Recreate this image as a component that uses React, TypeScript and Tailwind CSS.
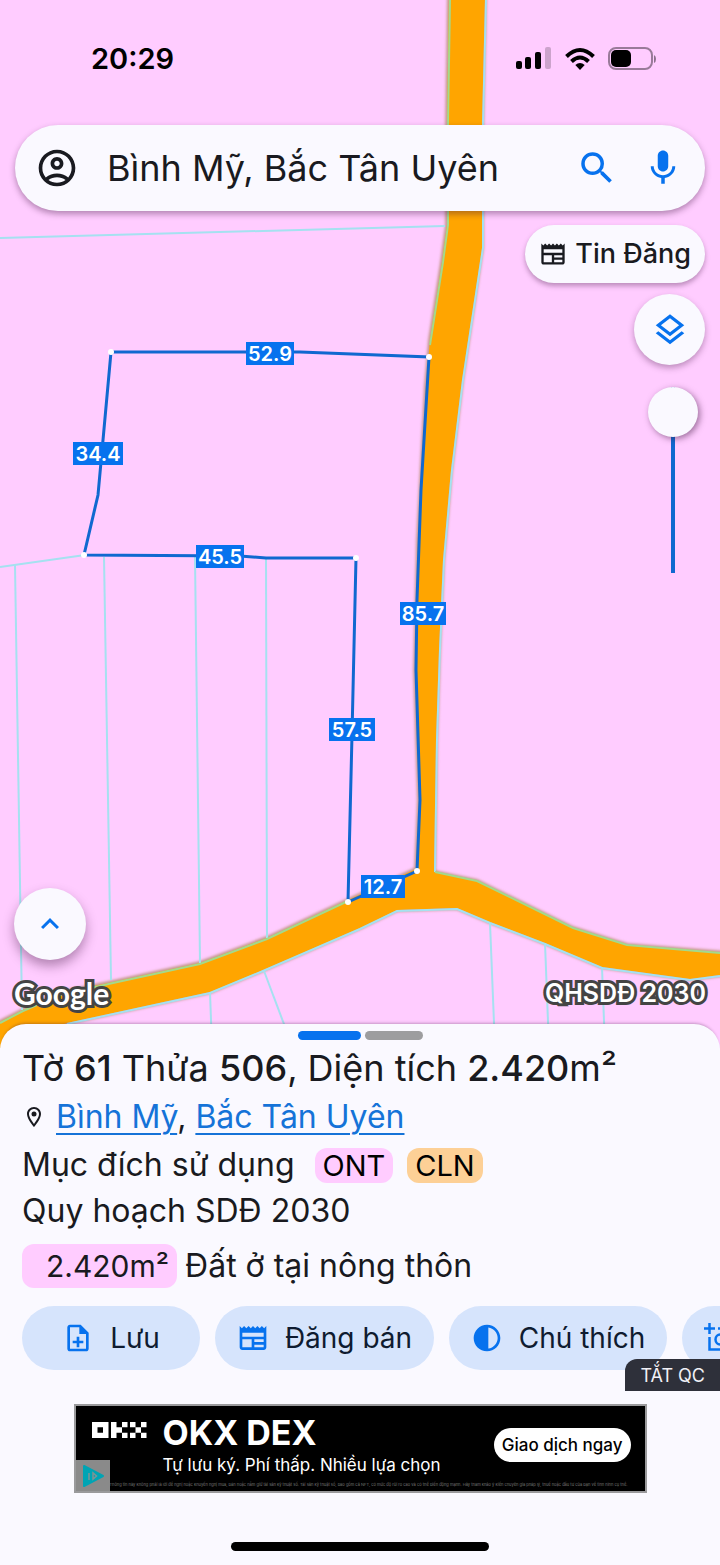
import { useState } from "react";
import type { ReactNode } from "react";
import {
  MdContrast,
  MdKeyboardArrowUp,
  MdMic,
  MdNewspaper,
  MdOutlineAccountCircle,
  MdOutlineLayers,
  MdOutlineLocationOn,
  MdOutlineNoteAdd,
  MdSearch,
} from "react-icons/md";

type EdgeLabel = {
  x: number;
  y: number;
  width: number;
  length: string;
};

const edgeLabels: EdgeLabel[] = [
  { x: 270, y: 354, width: 48, length: "52.9" },
  { x: 98, y: 454, width: 50, length: "34.4" },
  { x: 220, y: 557, width: 48, length: "45.5" },
  { x: 423, y: 614, width: 46, length: "85.7" },
  { x: 352, y: 730, width: 46, length: "57.5" },
  { x: 383, y: 887, width: 44, length: "12.7" },
];

const corners = [
  [111, 352],
  [429, 357],
  [84, 555],
  [356, 558],
  [417, 871],
  [348, 902],
];

const roadPath =
  "M449 -6 L447 125 L447 225 L442 262 L430 340 L426 385 L418 540 L415 670 L419 800 L416 869 L348 900 L267 938 L200 963 L113 982 L60 993 L23 1010 L-8 1026 V1070 L30 1036 L67 1023 L210 992 L263 970 L360 928 L397 910 L457 908 L490 922 L545 943 L602 967 L690 979 L728 974 V953 L627 945 L573 928 L477 881 L434 872 L436 740 L439 650 L443 560 L451 470 L462 380 L482 248 L482 125 L485 -6 Z";

function ParcelMap() {
  return (
    <svg
      className="absolute inset-0 size-full"
      viewBox="0 0 720 1048"
      preserveAspectRatio="xMidYMid slice"
      role="img"
      aria-label="Bản đồ thửa đất"
    >
      <defs>
        <filter id="roadEdge" x="-5%" y="-5%" width="110%" height="110%">
          <feGaussianBlur stdDeviation="1.5" />
        </filter>
      </defs>
      <rect width="720" height="1048" fill="#ffccff" />

      <path d={roadPath} fill="none" stroke="#b58a6c" strokeWidth="3" filter="url(#roadEdge)" />
      <path d={roadPath} fill="#ffa500" />

      {/* neighbouring parcels */}
      <g fill="none" stroke="#a5e1f0" strokeWidth="2">
        <path d="M0 238 L445 226" />
        <path d="M0 567 L85 555" />
        <path d="M15 565 L22 1010" />
        <path d="M104 557 L111 980" />
        <path d="M195 557 L200 963" />
        <path d="M266 558 L267 938" />
        <path d="M210 992 L212 1048" />
        <path d="M264 971 L290 1040" />
        <path d="M490 923 L495 1048" />
        <path d="M545 943 L549 1048" />
        <path d="M602 967 L605 1048" />
        <path d="M486 0 L483 125 L483 248 L463 380 L452 470 L444 560 L440 650 L437 740 L435 872" />
        <path d="M67 1024 L210 993 L263 971 L360 929 L397 911 L457 909 L490 923 L545 944 L602 968 L690 980 L720 976" />
      </g>
      <g fill="none" stroke="#a3d98c" strokeWidth="2">
        <path d="M450 0 L448 125 L448 225 L443 262 L430 345" />
        <path d="M0 1023 L23 1011 L60 995 L113 983 L200 964 L267 939 L348 901" />
        <path d="M435 872 L477 881 L573 928 L627 945 L720 953" />
      </g>

      <path
        d="M111 352 L300 352 L429 357 L421 490 L417 600 L416 670 L420 800 L417 871 L348 902 L352 735 L356 558 L266 558 L240 556 L84 555 L98 495 Z"
        fill="none"
        stroke="#1068d0"
        strokeWidth="3"
      />
      {corners.map(([x, y]) => (
        <circle key={`${x}-${y}`} cx={x} cy={y} r="3" fill="#fff" />
      ))}
      {edgeLabels.map((label) => (
        <g key={label.length}>
          <rect x={label.x - label.width / 2} y={label.y - 12} width={label.width} height="23" fill="#0772ee" />
          <text
            x={label.x}
            y={label.y + 7}
            textAnchor="middle"
            fill="#fff"
            className="font-['Inter',sans-serif] text-[20px] font-semibold"
          >
            {label.length}
          </text>
        </g>
      ))}
    </svg>
  );
}

function StatusBar() {
  return (
    <div className="flex h-[125px] items-center justify-between pt-2 pr-[62px] pb-4 pl-[91px] text-black">
      <time className="text-[29px] font-semibold">20:29</time>
      <div className="flex items-center gap-3">
        <svg width="36" height="24" viewBox="0 0 36 24" aria-label="Sóng di động">
          <rect x="0" y="14" width="6" height="8" rx="2" />
          <rect x="9" y="10" width="6" height="12" rx="2" />
          <rect x="19" y="5" width="6" height="17" rx="2" />
          <rect x="29" y="0" width="6" height="22" rx="2" opacity="0.2" />
        </svg>
        <svg width="32" height="24" viewBox="0 0 32 24" aria-label="Wi-Fi">
          <g fill="none" stroke="#000" strokeWidth="4">
            <path d="M2.5 9.5 Q16 -3.5 29.5 9.5" />
            <path d="M7.5 14.5 Q16 6.5 24.5 14.5" />
          </g>
          <path d="M11.3 18 Q16 14 20.7 18 L16 23 Z" />
        </svg>
        <svg width="50" height="24" viewBox="0 0 50 24" aria-label="Pin">
          <rect x="1" y="1" width="43" height="21" rx="7" fill="none" stroke="#000" strokeOpacity="0.4" strokeWidth="2" />
          <rect x="3" y="3" width="20" height="17" rx="5" />
          <path d="M46 8 Q48 9 48 12 Q48 15 46 16 Z" opacity="0.45" />
        </svg>
      </div>
    </div>
  );
}

function SearchBar() {
  const [query, setQuery] = useState("Bình Mỹ, Bắc Tân Uyên");

  return (
    <form
      role="search"
      className="mx-[15px] flex h-[86px] items-center rounded-full bg-[#faf9ff] pr-[21px] pl-5 shadow-[0_3px_6px_rgba(60,20,60,0.4)]"
    >
      <button type="button" aria-label="Tài khoản">
        <MdOutlineAccountCircle className="size-[44px] text-[#191a20]" />
      </button>
      <input
        type="text"
        aria-label="Tìm kiếm"
        value={query}
        onChange={(event) => setQuery(event.target.value)}
        className="ml-7 min-w-0 flex-1 bg-transparent text-[36px] text-[#191a20] outline-none"
      />
      <button type="submit" aria-label="Tìm">
        <MdSearch className="size-[42px] text-[#0772ee]" />
      </button>
      <button type="button" aria-label="Tìm bằng giọng nói" className="ml-6">
        <MdMic className="size-[42px] text-[#0772ee]" />
      </button>
    </form>
  );
}

function MapTools() {
  const [opacity, setOpacity] = useState(100);

  return (
    <div className="mt-[14px] mr-[15px] flex flex-col items-end">
      <button
        type="button"
        className="flex h-[58px] items-center gap-2 rounded-full bg-[#faf9ff] px-[14px] text-[27px] font-medium text-[#191a20] shadow-[0_3px_5px_rgba(60,20,60,0.35)]"
      >
        <MdNewspaper className="size-7" />
        Tin Đăng
      </button>
      <button
        type="button"
        aria-label="Lớp bản đồ"
        className="mt-[11px] flex size-[71px] items-center justify-center rounded-full bg-[#faf9ff] shadow-[0_3px_6px_rgba(60,20,60,0.35)]"
      >
        <MdOutlineLayers className="size-[38px] text-[#0772ee]" />
      </button>
      <input
        type="range"
        aria-label="Độ trong suốt"
        min={0}
        max={100}
        value={opacity}
        onChange={(event) => setOpacity(Number(event.target.value))}
        className="mt-[22px] mr-[7px] h-[186px] w-[50px] appearance-none bg-[linear-gradient(#1068d0,#1068d0)] bg-[length:4px_100%] bg-center bg-no-repeat [direction:rtl] [writing-mode:vertical-lr] [&::-webkit-slider-thumb]:size-[50px] [&::-webkit-slider-thumb]:appearance-none [&::-webkit-slider-thumb]:rounded-full [&::-webkit-slider-thumb]:bg-[#faf9ff] [&::-webkit-slider-thumb]:shadow-[2px_2px_6px_rgba(60,20,60,0.5)]"
      />
    </div>
  );
}

function AddFrameIcon() {
  return (
    <svg className="size-8 shrink-0 text-[#0772ee]" viewBox="0 0 32 32" fill="none" stroke="currentColor" strokeWidth="2.5" aria-hidden>
      <path d="M0 6.500h11M5.500 1v11" />
      <path d="M14 6.500h5M22 6.500h5v5" />
      <path d="M5.500 15v12.500h22V15" />
      <circle cx="16.500" cy="17.500" r="5" />
    </svg>
  );
}

function ActionButton({ icon, label, width }: { icon: ReactNode; label: string; width: string }) {
  return (
    <button
      type="button"
      className={`flex h-16 shrink-0 items-center justify-center rounded-full bg-[#d6e4fc] text-[28px] text-[#0f1b30] ${width}`}
    >
      {icon}
      {label}
    </button>
  );
}

function ParcelSheet() {
  return (
    <section className="relative -mt-6 rounded-t-[26px] bg-[#faf9ff] pt-[7px] text-[#191a20] shadow-[0_-3px_3px_-2px_rgba(60,20,60,0.3)]">
      <div className="flex justify-center gap-1">
        <span className="h-[9px] w-[63px] rounded-full bg-[#0772ee]" />
        <span className="h-[9px] w-[58px] rounded-full bg-[#9d9d9f]" />
      </div>

      <div className="px-[22px]">
        <h1 className="mt-1 text-[36px] leading-[48px]">
          Tờ <b className="font-medium">61</b> Thửa <b className="font-medium">506</b>, Diện tích{" "}
          <b className="font-medium">2.420</b>m²
        </h1>
        <p className="flex items-center text-[32px] leading-[50px]">
          <MdOutlineLocationOn className="mr-[10px] size-6" />
          <span>
            <a href="#binh-my" className="text-[#1573d8] underline decoration-2 underline-offset-[5px]">
              Bình Mỹ
            </a>
            ,{" "}
            <a href="#bac-tan-uyen" className="text-[#1573d8] underline decoration-2 underline-offset-[5px]">
              Bắc Tân Uyên
            </a>
          </span>
        </p>
        <p className="flex items-center text-[32px] leading-[46px]">
          Mục đích sử dụng
          <span className="ml-5 rounded-xl bg-[#ffccff] px-2 text-[29px] leading-[35px] text-black">ONT</span>
          <span className="ml-[14px] rounded-xl bg-[#fdd096] px-2 text-[29px] leading-[35px] text-black">CLN</span>
        </p>
        <h2 className="text-[32px] leading-[46px]">Quy hoạch SDĐ 2030</h2>
        <p className="mt-[10px] flex items-center text-[32px] leading-[44px]">
          <span className="mr-2 rounded-xl bg-[#ffccff] pr-2 pl-6 text-[30px] leading-[44px]">2.420m²</span>
          Đất ở tại nông thôn
        </p>
      </div>

      <div className="relative">
        <div className="mt-[18px] flex gap-[15px] overflow-hidden pl-[22px]">
          <ActionButton icon={<MdOutlineNoteAdd className="mr-4 size-8 text-[#0772ee]" />} label="Lưu" width="w-[178px]" />
          <ActionButton icon={<MdNewspaper className="mr-4 size-8 text-[#0772ee]" />} label="Đăng bán" width="w-[219px]" />
          <ActionButton icon={<MdContrast className="mr-4 size-8 text-[#0772ee]" />} label="Chú thích" width="w-[218px]" />
          <button
            type="button"
            aria-label="Thêm ảnh"
            className="flex h-16 w-[178px] shrink-0 items-center rounded-full bg-[#d6e4fc] pl-[22px]"
          >
            <AddFrameIcon />
          </button>
        </div>
        <button
          type="button"
          className="absolute top-[53px] right-0 h-8 rounded-tl-xl bg-[#2e303a] px-[15px] text-[18px] text-[#f1f0f6]"
        >
          TẮT QC
        </button>
      </div>
    </section>
  );
}

function AdBanner() {
  return (
    <a
      href="#okx-dex"
      className="relative mx-auto mt-[34px] flex h-[89px] w-[573px] max-w-full items-center overflow-hidden border-2 border-[#9a9a9c] bg-black pr-[14px] pl-4 text-white"
    >
      <svg width="55" height="16" viewBox="0 0 55 16" fill="#fff" className="mb-[38px] shrink-0" aria-label="OKX">
        <path fillRule="evenodd" d="M0 0H16.500V16H0Z M5.500 5.300V10.700H11V5.300Z" />
        <path d="M19 0h5.500v5.300h5.500v5.400h-5.500V16H19Z M30 0h5.500v5.300H30Z M30 10.700h5.500V16H30Z" />
        <path d="M38 0h5.500v5.300H38Z M49 0h5.500v5.300H49Z M43.500 5.300H49v5.400h-5.500Z M38 10.700h5.500V16H38Z M49 10.700h5.500V16H49Z" />
      </svg>
      <div className="ml-4 flex-1 pb-2">
        <p className="text-[34px] leading-[40px] font-bold">OKX DEX</p>
        <p className="text-[17px] leading-6">Tự lưu ký. Phí thấp. Nhiều lựa chọn</p>
      </div>
      <span className="mb-2 rounded-full bg-white px-2 text-[17px] leading-[34px] font-medium text-black">
        Giao dịch ngay
      </span>
      <small className="absolute bottom-1 left-[34px] text-[4px] leading-[5px] whitespace-nowrap text-[#777]">
        Thông tin này không phải là lời đề nghị hoặc khuyến nghị mua, bán hoặc nắm giữ tài sản kỹ thuật số. Tài sản kỹ
        thuật số, bao gồm cả NFT, có mức độ rủi ro cao và có thể biến động mạnh. Hãy tham khảo ý kiến chuyên gia pháp lý,
        thuế hoặc đầu tư của bạn về tình hình cụ thể.
      </small>
      <span className="absolute bottom-0 left-0 flex h-[31px] w-[34px] items-center justify-center bg-[#8a8a8a]">
        <svg width="24" height="24" viewBox="0 0 24 24" aria-hidden>
          <path d="M3 2 L22 12 L3 22 Z" fill="#00a4b4" stroke="#00a4b4" strokeWidth="2" strokeLinejoin="round" />
          <path d="M8 9v7M12 9v6l3.500 -3z" fill="none" stroke="#7e9394" strokeWidth="1.500" />
        </svg>
      </span>
    </a>
  );
}

export default function App() {
  return (
    <main className="flex min-h-screen flex-col overflow-hidden bg-[#faf9ff] font-['Inter',sans-serif]">
      <section className="relative flex min-h-[700px] flex-1 flex-col">
        <ParcelMap />
        <div className="relative flex flex-1 flex-col">
          <StatusBar />
          <SearchBar />
          <MapTools />
          <div className="mt-auto px-[14px] pb-[38px]">
            <button
              type="button"
              aria-label="Mở rộng"
              className="flex size-[72px] items-center justify-center rounded-full bg-[#faf9ff] shadow-[0_6px_12px_rgba(60,20,60,0.4)]"
            >
              <MdKeyboardArrowUp className="size-9 text-[#0772ee]" />
            </button>
            <div className="mt-4 flex items-center justify-between leading-[34px] text-white [-webkit-text-stroke:6px_#444] [paint-order:stroke_fill]">
              <span className="font-['Lato',sans-serif] text-[30px] font-bold">Google</span>
              <span className="text-[25px] font-semibold">QHSDĐ 2030</span>
            </div>
          </div>
        </div>
      </section>
      <ParcelSheet />
      <AdBanner />
      <div className="mx-auto mt-[49px] mb-[14px] h-[9px] w-[258px] rounded-full bg-black" />
    </main>
  );
}
